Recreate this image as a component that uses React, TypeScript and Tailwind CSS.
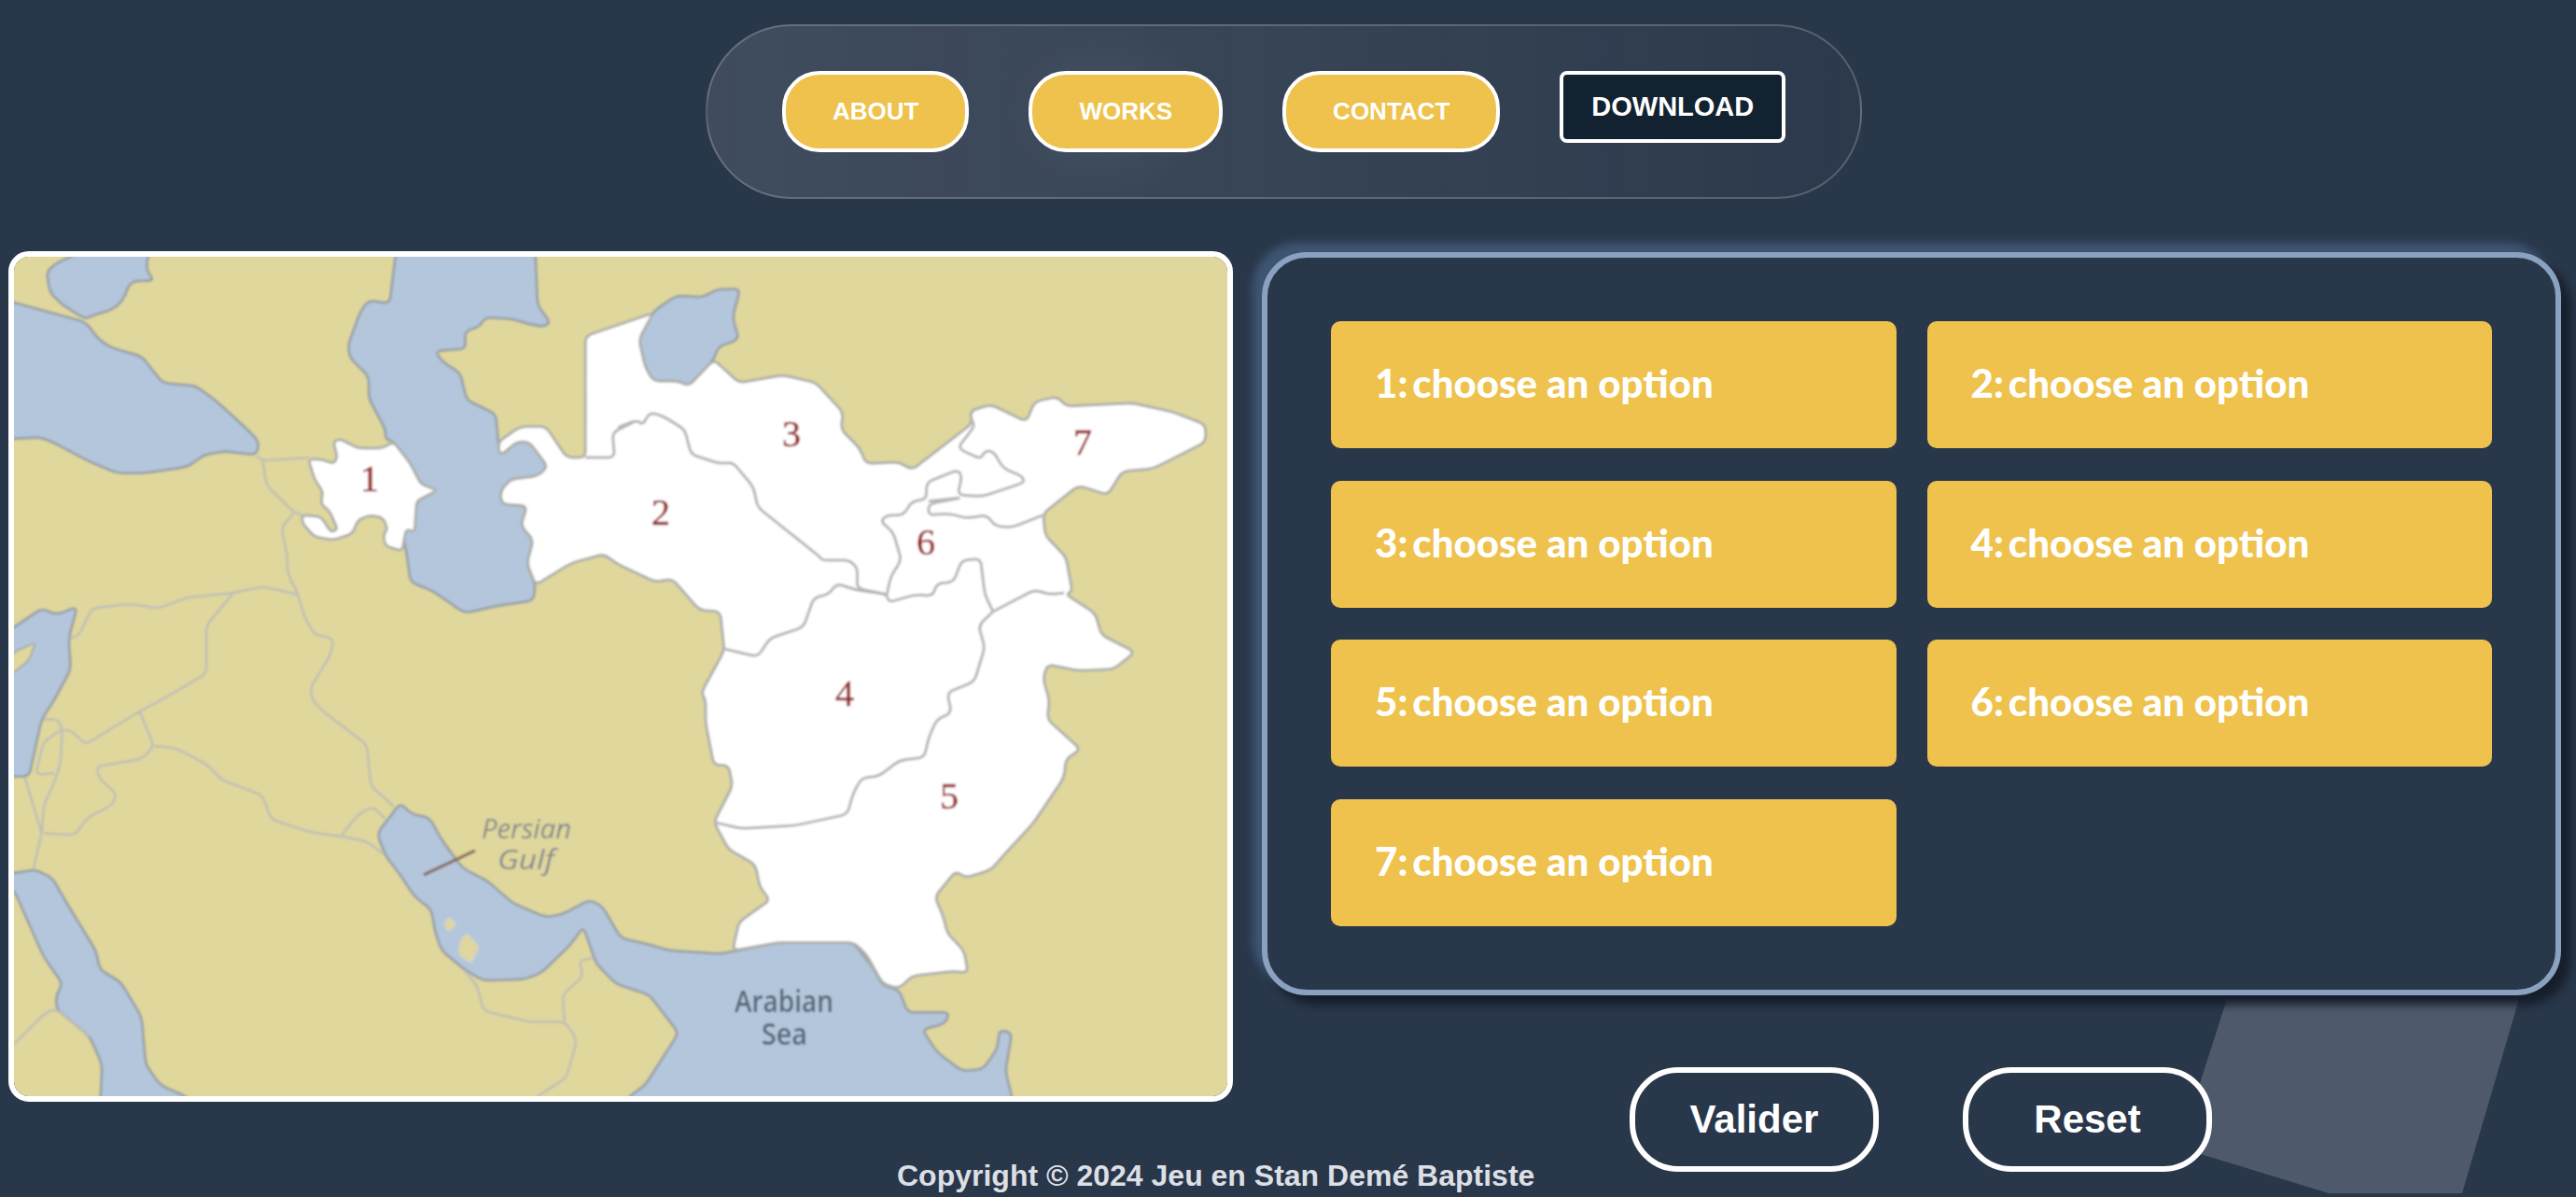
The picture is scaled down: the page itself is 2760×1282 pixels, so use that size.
const toPage = (n: number[], ox: number, oy: number, sy = 3) => {
  const out: [number, number][] = [];
  for (let i = 0; i < n.length; i += 2) out.push([ox + n[i] / 2.24, oy + n[i + 1] / sy]);
  return out;
};
// map was traced from four crops, each one has its own origin and scale
const A = (...n: number[]) => toPage(n, 0, 250);
const B = (...n: number[]) => toPage(n, 660, 250);
const C = (...n: number[]) => toPage(n, 0, 750, 2.947);
const D = (...n: number[]) => toPage(n, 660, 750, 2.947);

type Pt = [number, number];
const f = (p: Pt) => `${p[0].toFixed(1)} ${p[1].toFixed(1)}`;
// point on the segment a->b, at most r px away from a
const toward = (a: Pt, b: Pt, r: number): Pt => {
  const len = Math.hypot(b[0] - a[0], b[1] - a[1]) || 1;
  const k = Math.min(0.45, r / len);
  return [a[0] + (b[0] - a[0]) * k, a[1] + (b[1] - a[1]) * k];
};
const smooth = (p: Pt[], closed = true, r = 7) => {
  const n = p.length;
  let d = closed ? `M${f(toward(p[0], p[1], r))}` : `M${f(p[0])}`;
  const to = closed ? n + 1 : n - 1;
  for (let i = 1; i < to; i++) {
    const cur = p[i % n];
    d += `L${f(toward(cur, p[(i - 1 + n) % n], r))}Q${f(cur)} ${f(toward(cur, p[(i + 1) % n], r))}`;
  }
  return closed ? d + "Z" : d + `L${f(p[n - 1])}`;
};

const seas = [
  A(190, 60, 130, 100, 112, 125, 120, 190, 150, 230, 205, 275, 225, 262, 270, 245, 295, 215, 310, 165, 325, 152, 370, 152, 350, 115, 358, 60),
  A(0, 208, 34, 222, 205, 285, 240, 345, 270, 368, 340, 395, 390, 480, 470, 490, 520, 540, 590, 625, 622, 670, 615, 712, 540, 700, 490, 712, 450, 750, 350, 770, 280, 770, 210, 730, 140, 680, 100, 655, 34, 660, 0, 665),
  A(1285, 60, 1290, 230, 1320, 285, 1305, 300, 1265, 290, 1230, 275, 1165, 270, 1150, 300, 1115, 315, 1118, 370, 1045, 378, 1060, 410, 1105, 450, 1120, 535, 1190, 580, 1195, 660, 1200, 715, 1240, 670, 1270, 670, 1315, 750, 1290, 780, 1225, 790, 1200, 830, 1205, 870, 1265, 875, 1250, 940, 1280, 985, 1265, 1060, 1285, 1130, 1280, 1180, 1200, 1195, 1115, 1220, 1040, 1150, 985, 1120, 975, 1020, 965, 960, 995, 930, 1000, 860, 1050, 825, 1010, 805, 985, 740, 945, 670, 925, 660, 925, 630, 885, 530, 885, 460, 840, 400, 835, 360, 865, 250, 885, 215, 935, 225, 950, 60),
  B(145, 200, 210, 205, 240, 180, 298, 178, 280, 270, 295, 340, 245, 365, 235, 405, 175, 490, 150, 475, 90, 475, 70, 430, 55, 340, 90, 250),
  // mediterranean corner
  [...A(0, 1290, 34, 1265, 100, 1205, 135, 1225, 185, 1200, 165, 1300, 170, 1400, 130, 1500), ...C(100, 60, 70, 240, 34, 240, 0, 245)],
  C(0, 545, 34, 545, 85, 535, 125, 560, 160, 640, 230, 790, 240, 850, 290, 890, 340, 1000, 350, 1150, 385, 1215, 450, 1252, 470, 1290, 240, 1290, 245, 1150, 215, 1060, 135, 975, 135, 930, 150, 895, 105, 810, 34, 600, 0, 590),
  // persian gulf and arabian sea
  [
    ...C(960, 325, 990, 360, 1030, 370, 1060, 440, 1110, 530, 1170, 570, 1230, 640, 1310, 685, 1350, 675, 1415, 630, 1445, 650, 1490, 750),
    ...D(90, 775, 130, 790, 250, 800, 390, 765, 570, 765, 620, 850, 640, 900, 680, 915, 700, 985, 800, 985, 790, 1020, 735, 1040, 770, 1110, 830, 1170, 880, 1165, 915, 1100, 920, 1040, 950, 1050, 935, 1170, 950, 1252, 960, 1300, 20, 1300, 30, 1252, 70, 1215, 150, 1050, 80, 930, 0, 895),
    ...C(1430, 830, 1420, 790, 1400, 715, 1370, 770, 1300, 860, 1260, 880, 1160, 885, 1115, 850, 1060, 790, 1045, 735, 1035, 660, 995, 620, 960, 550, 925, 490, 905, 420, 935, 370),
  ],
];

const cyprus = A(34, 1345, 85, 1315, 70, 1370, 34, 1410, 10, 1400);
const islands = [C(1065, 700, 1080, 685, 1095, 710, 1075, 730), C(1120, 735, 1150, 780, 1130, 830, 1100, 800, 1105, 760)];

const regionOne = A(740, 725, 770, 725, 800, 740, 810, 720, 800, 670, 815, 660, 860, 690, 915, 690, 945, 670, 985, 740, 1010, 805, 1050, 825, 1000, 860, 995, 960, 975, 950, 965, 1020, 925, 1005, 920, 970, 930, 950, 920, 915, 890, 905, 860, 920, 845, 965, 800, 985, 755, 975, 725, 930, 725, 905, 770, 910, 795, 960, 810, 950, 790, 890, 770, 870, 775, 830, 755, 790);

const mainland = [
  ...B(90, 255, 55, 340, 70, 430, 90, 475, 150, 475, 175, 490, 235, 405, 295, 480, 400, 455, 480, 480, 545, 575, 540, 630, 585, 690, 600, 740, 680, 735, 710, 760, 855, 610, 850, 570, 900, 550, 985, 605, 1005, 540, 1060, 525, 1080, 555, 1240, 545, 1340, 575, 1415, 615, 1415, 670, 1290, 755, 1215, 765, 1180, 840, 1110, 810, 1025, 900, 1030, 970, 1080, 1040, 1095, 1150, 1080, 1160, 1150, 1220, 1165, 1290, 1245, 1345, 1195, 1400, 1110, 1405, 1035, 1385, 1025, 1430, 1040, 1500),
  ...D(1035, 60, 1115, 155, 1080, 185, 1075, 245, 1000, 390, 930, 490, 900, 535, 840, 560, 815, 540, 765, 620, 785, 680, 795, 735, 835, 790, 845, 860, 810, 855, 710, 870, 680, 910, 640, 895, 600, 800, 570, 765, 390, 765, 280, 790, 295, 700, 370, 630, 345, 590, 335, 520, 290, 485, 270, 470, 235, 385, 280, 270, 270, 205, 235, 205, 215, 70, 215, 0),
  ...B(205, 1475, 260, 1340, 250, 1215, 200, 1210, 135, 1110, 95, 1120, 0, 1060),
  ...A(1450, 1030, 1370, 1060, 1285, 1130, 1265, 1060, 1280, 985, 1250, 940, 1265, 875, 1205, 870, 1200, 830, 1225, 790, 1290, 780, 1315, 750, 1270, 670, 1240, 670, 1200, 715, 1195, 670, 1250, 620, 1310, 620, 1360, 720, 1405, 720, 1405, 330),
];

const regionLines = [
  [...A(1405, 720, 1475, 720, 1470, 640, 1530, 600), ...B(0, 625, 50, 600, 65, 615, 80, 575, 110, 585, 165, 630, 180, 710, 250, 740, 280, 735, 330, 815, 340, 880, 420, 965, 490, 1040, 495, 1050, 560, 1050, 580, 1075, 578, 1140, 650, 1160)],
  B(260, 1335, 340, 1360, 370, 1300, 450, 1265, 475, 1170, 510, 1160, 530, 1125, 575, 1145, 650, 1160, 655, 1185, 720, 1160, 760, 1165, 770, 1125, 810, 1120, 830, 1050, 875, 1045, 885, 1160, 905, 1215),
  B(650, 1160, 660, 1100, 685, 1050, 665, 960, 635, 925, 650, 905, 690, 905, 710, 860, 745, 855, 745, 800, 820, 760, 830, 780, 820, 840, 880, 845, 980, 800, 975, 780, 930, 755, 905, 700, 885, 700, 875, 725, 820, 690, 860, 620, 855, 600),
  B(750, 860, 825, 850),
  B(825, 850, 750, 870, 750, 905, 800, 900, 840, 915, 890, 905, 910, 940, 950, 945, 1025, 905),
  B(905, 1215, 1005, 1145, 1040, 1160, 1075, 1155),
  [...B(905, 1215, 870, 1260, 885, 1330, 860, 1440, 795, 1475), ...D(805, 40, 770, 60, 750, 120, 740, 180, 680, 190, 630, 240, 590, 245, 570, 290, 555, 360, 430, 395, 300, 405, 235, 385)],
];

const landLines = [
  A(615, 715, 630, 730, 740, 720),
  A(630, 730, 640, 810, 705, 895, 725, 905),
  [...A(705, 900, 675, 945, 690, 1040, 690, 1090, 715, 1160, 730, 1230, 755, 1290, 800, 1300, 795, 1350, 745, 1460), ...C(750, 0, 780, 40, 880, 140, 890, 270, 945, 335)],
  A(715, 1160, 630, 1135, 560, 1155, 450, 1170, 380, 1205, 310, 1190, 220, 1205, 190, 1290, 170, 1300),
  [...A(560, 1155, 495, 1260, 495, 1415, 385, 1500), ...C(335, 35, 205, 140, 175, 100, 150, 90, 105, 130, 85, 235, 130, 230)],
  C(105, 60, 140, 60, 150, 95, 145, 200, 130, 260, 105, 330, 100, 420, 80, 535),
  C(60, 245, 100, 420),
  C(335, 35, 370, 145, 340, 185, 230, 210, 240, 250, 280, 295, 270, 330, 210, 370, 180, 425, 105, 420),
  C(370, 145, 420, 150, 500, 205, 530, 250, 630, 300, 650, 375, 740, 415, 820, 430, 880, 445, 920, 485),
  C(820, 425, 860, 360, 895, 335, 925, 375),
  C(1115, 855, 1145, 900, 1160, 980, 1270, 1015, 1355, 1015, 1385, 1070, 1360, 1190, 1290, 1250),
  C(1355, 1015, 1350, 930, 1400, 870, 1390, 820, 1420, 815),
  C(34, 1085, 110, 985, 135, 975, 215, 1060),
];

const numbers: [string, number, number][] = [
  ["1", 396, 526],
  ["2", 708, 562],
  ["3", 848, 478],
  ["4", 905, 756],
  ["5", 1017, 866],
  ["6", 992, 594],
  ["7", 1160, 487],
];

const RegionMap = () => (
  <svg viewBox="15 275 1300 899" className="block h-full w-full">
    <defs>
      <filter id="soft" x="-2%" y="-2%" width="104%" height="104%">
        <feGaussianBlur stdDeviation="1" />
      </filter>
    </defs>
    <g filter="url(#soft)">
      <rect x="-20" y="240" width="1400" height="980" fill="#e0d79c" />
      {seas.map((s, i) => (
        <path key={i} d={smooth(s)} fill="#b3c6dc" stroke="#9ca4a9" strokeWidth="3" />
      ))}
      <path d={smooth(cyprus, true, 4)} fill="#e0d79c" stroke="#a8acaa" strokeWidth="2" />
      {islands.map((s, i) => (
        <path key={i} d={smooth(s, true, 4)} fill="#e0d79c" stroke="#d0d1c4" strokeWidth="2.5" />
      ))}
      {landLines.map((s, i) => (
        <path key={i} d={smooth(s, false)} fill="none" stroke="#bebfb6" strokeWidth="2.5" strokeLinejoin="round" />
      ))}
      <path d={smooth(regionOne, true, 5)} fill="#ffffff" stroke="#afb1ac" strokeWidth="3" />
      <path d={smooth(mainland)} fill="#ffffff" stroke="#afb1ac" strokeWidth="3" />
      {regionLines.map((s, i) => (
        <path key={i} d={smooth(s, false)} fill="none" stroke="#b6b6b6" strokeWidth="3" strokeLinejoin="round" />
      ))}
      <line x1="454" y1="937" x2="509" y2="911" stroke="#8d6f60" strokeWidth="3.5" />
      {numbers.map(([n, x, y]) => (
        <text key={n} x={x} y={y} textAnchor="middle" fontFamily="'Liberation Serif', serif" fontSize="40" fill="#952525" stroke="#952525" strokeWidth="0.5">
          {n}
        </text>
      ))}
      <g fontFamily="'Open Sans', sans-serif" fontStyle="italic" fontSize="30" fill="#838a8e">
        <text x="516" y="898" textLength="96" lengthAdjust="spacingAndGlyphs">Persian</text>
        <text x="533" y="931" textLength="61" lengthAdjust="spacingAndGlyphs">Gulf</text>
      </g>
      <g fontFamily="'Open Sans', sans-serif" fontWeight="600" fontSize="33" fill="#566575">
        <text x="787" y="1084" textLength="106" lengthAdjust="spacingAndGlyphs">Arabian</text>
        <text x="816" y="1119" textLength="49" lengthAdjust="spacingAndGlyphs">Sea</text>
      </g>
    </g>
  </svg>
);

const App = () => {
  return (
    <div className="relative h-screen overflow-hidden bg-[#29374a] font-['Liberation_Sans',Arial,sans-serif] text-white">
      <div className="absolute left-[2330px] top-[1070px] h-[208px] w-[370px] bg-[#4e5a6b] [clip-path:polygon(56px_0,369px_0,308px_208px,165px_208px,5px_159px)]" />

      <div className="pt-[26px]">
        <nav className="ml-[756px] flex w-fit items-start gap-[64px] rounded-[92px] border-2 border-white/20 bg-[radial-gradient(ellipse_110px_90px_at_424px_50%,rgba(255,255,255,0.05),transparent),linear-gradient(90deg,rgba(255,255,255,0.11),rgba(255,255,255,0.08)_40%,rgba(255,255,255,0.015))] px-[80px] py-[48px]">
          {["ABOUT", "WORKS", "CONTACT"].map((label) => (
            <a key={label} className="flex h-[87px] items-center rounded-[40px] border-4 border-white bg-[#eec24c] px-[50px] text-[26px] font-bold">
              {label}
            </a>
          ))}
          <a className="flex h-[77px] items-center rounded-lg border-4 border-white bg-[#122230] px-[30px] text-[29px] font-bold">
            DOWNLOAD
          </a>
        </nav>
      </div>

      <main className="mt-[56px] flex items-start gap-[31px] pl-[9px]">
        <div className="h-[911px] w-[1312px] shrink-0 overflow-hidden rounded-[22px] border-[6px] border-white">
          <RegionMap />
        </div>

        <div className="relative z-10 mt-px w-[1392px] shrink-0">
          <section className="grid grid-cols-2 gap-x-[33px] gap-y-[34.5px] rounded-[48px] border-[6px] border-[#8aa1bf] bg-[#29374a] px-[68px] pb-[68px] pt-[68px] shadow-[10px_10px_10px_#161e2a,-10px_-10px_10px_#3f5673]">
            {[1, 2, 3, 4, 5, 6, 7].map((n) => (
              <div key={n} className="flex h-[136px] items-center whitespace-pre rounded-[10px] bg-[#eec24c] pb-[3px] pl-[47px] font-['Lato',sans-serif] text-[42px] font-black">
                <span className="mr-[-5px]">{n}:</span>
                <span> choose an option</span>
              </div>
            ))}
          </section>

          <div className="mt-[77px] flex gap-[90px] pl-[394px]">
            <button className="h-[112px] w-[267px] rounded-[52px] border-[6px] border-white bg-[#29374a] text-[42px] font-bold">Valider</button>
            <button className="h-[112px] w-[267px] rounded-[52px] border-[6px] border-white bg-[#29374a] text-[42px] font-bold">Reset</button>
          </div>
        </div>
      </main>

      <footer className="-mt-[20px] ml-[961px] w-fit whitespace-nowrap text-[32px] font-bold text-[#dcdfe4]">
        Copyright © 2024 Jeu en Stan Demé Baptiste
      </footer>
    </div>
  );
};

export default App;
